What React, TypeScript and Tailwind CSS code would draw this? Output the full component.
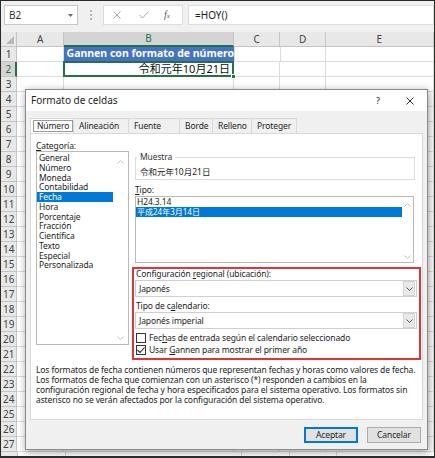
import React from "react";

function ChevUp({ className }: { className?: string }) {
  return (
    <svg width="7" height="4" viewBox="0 0 7 4" className={className}>
      <path d="M0.5 3.5L3.5 0.5L6.5 3.5" fill="none" stroke="currentColor" strokeWidth="1" />
    </svg>
  );
}
function ChevDown({ className }: { className?: string }) {
  return (
    <svg width="7" height="4" viewBox="0 0 7 4" className={className}>
      <path d="M0.5 0.5L3.5 3.5L6.5 0.5" fill="none" stroke="currentColor" strokeWidth="1" />
    </svg>
  );
}

function FormulaBar() {
  return (
    <div className="flex h-[31px] bg-[#f0f0f0] pt-[4px] pl-[3px]">
      <div className="relative w-[74px] h-[20px] bg-white border border-[#c8c8c8] flex items-center pl-[4px] text-[10px] text-[#333]">
        B2
        <svg width="5" height="3" viewBox="0 0 5 3" className="absolute right-[4px] top-[8px] text-[#666]">
          <path d="M0 0H5L2.5 3Z" fill="currentColor" />
        </svg>
      </div>
      <div className="w-[25px] h-[20px] flex flex-col items-center justify-center gap-[2px]">
        <span className="w-[2px] h-[2px] bg-[#b4b4b4]" />
        <span className="w-[2px] h-[2px] bg-[#b4b4b4]" />
        <span className="w-[2px] h-[2px] bg-[#b4b4b4]" />
      </div>
      <div className="w-[80px] h-[20px] bg-white border border-[#dcdcdc] flex items-center">
        <svg width="8" height="8" viewBox="0 0 8 8" className="ml-[9px] text-[#a8a8a8]">
          <path d="M0.5 0.5L7.5 7.5M7.5 0.5L0.5 7.5" stroke="currentColor" strokeWidth="1" />
        </svg>
        <svg width="10" height="8" viewBox="0 0 10 8" className="ml-[18px] text-[#a8a8a8]">
          <path d="M0.5 4L3.5 7L9.5 0.5" fill="none" stroke="currentColor" strokeWidth="1" />
        </svg>
        <span className="ml-[15px] font-['Liberation_Serif',serif] italic text-[10px] text-[#555] leading-none">
          f<span className="text-[7px]">x</span>
        </span>
      </div>
      <div className="flex-1 ml-[5px] h-[20px] bg-white border border-[#dcdcdc] flex items-center pl-[6px] text-[10px] text-[#222]">
        =HOY()
      </div>
    </div>
  );
}

function Grid() {
  const rows = Array.from({ length: 27 }, (_, i) => i + 1);
  return (
    <div className="flex flex-col">
      <div className="flex h-[15px] text-[10px] text-[#444]">
        <div className="relative w-[17px] h-full bg-[#e8e8e8] border-r border-b border-[#c4c4c4]">
          <svg width="8" height="8" viewBox="0 0 8 8" className="absolute right-[2px] bottom-[2px]">
            <path d="M8 0V8H0Z" fill="#b8b8b8" />
          </svg>
        </div>
        <div className="w-[48px] h-full bg-[#e8e8e8] border-r border-b border-[#c4c4c4] flex items-center justify-center">A</div>
        <div className="w-[176px] h-full bg-[#d4d4d4] border-r border-[#c4c4c4] border-b-2 border-b-[#217346] flex items-center justify-center text-[#217346]">B</div>
        <div className="w-[48px] h-full bg-[#e8e8e8] border-r border-b border-[#c4c4c4] flex items-center justify-center">C</div>
        <div className="w-[47px] h-full bg-[#e8e8e8] border-r border-b border-[#c4c4c4] flex items-center justify-center">D</div>
        <div className="w-[112px] h-full bg-[#e8e8e8] border-r border-b border-[#c4c4c4] flex items-center justify-center">E</div>
      </div>
      {rows.map((n) => (
        <div key={n} className="flex h-[15px]">
          <div
            className={
              n === 2
                ? "w-[17px] h-full bg-[#d4d4d4] border-r-2 border-r-[#217346] border-b border-b-[#c4c4c4] flex items-center justify-center text-[10px] text-[#217346]"
                : "w-[17px] h-full bg-[#e8e8e8] border-r border-b border-[#c4c4c4] flex items-center justify-center text-[10px] text-[#444]"
            }
          >
            {n}
          </div>
          <div className="w-[48px] h-full border-r border-b border-[#dcdcdc]" />
          {n === 1 ? (
            <div className="w-[176px] h-full bg-[#4472c4] border-r border-b border-[#dcdcdc] flex items-center pl-[3px] text-[10.5px] font-bold text-white whitespace-nowrap">
              Gannen con formato de número
            </div>
          ) : n === 2 ? (
            <div className="relative w-[176px] h-full border-r border-b border-[#dcdcdc] flex items-center justify-end pr-[3px] text-[11px] text-[#111] font-['Noto_Sans','Noto_Sans_CJK_JP',sans-serif]">
              令和元年10月21日
              <div className="absolute -left-[1px] -top-[1px] -right-[1px] -bottom-[1px] border-2 border-[#217346]" />
              <div className="absolute -right-[3px] -bottom-[3px] w-[5px] h-[5px] bg-[#217346] border border-white" />
            </div>
          ) : (
            <div className="w-[176px] h-full border-r border-b border-[#dcdcdc]" />
          )}
          <div className="w-[48px] h-full border-r border-b border-[#dcdcdc]" />
          <div className="w-[47px] h-full border-r border-b border-[#dcdcdc]" />
          <div className="w-[112px] h-full border-r border-b border-[#dcdcdc]" />
        </div>
      ))}
      <div className="flex h-[15px]">
        <div className="w-[17px] h-full bg-[#e8e8e8] border-r border-[#c4c4c4]" />
        <div className="w-[48px] h-full border-r border-[#dcdcdc]" />
        <div className="w-[176px] h-full border-r border-[#dcdcdc]" />
        <div className="w-[48px] h-full border-r border-[#dcdcdc]" />
        <div className="w-[47px] h-full border-r border-[#dcdcdc]" />
      </div>
    </div>
  );
}

const categories = [
  "General",
  "Número",
  "Moneda",
  "Contabilidad",
  "Fecha",
  "Hora",
  "Porcentaje",
  "Fracción",
  "Científica",
  "Texto",
  "Especial",
  "Personalizada",
];

const tabs = [
  { label: "Número", w: "w-[44px]", sel: true },
  { label: "Alineación", w: "w-[55px]", sel: false },
  { label: "Fuente", w: "w-[51px]", sel: false },
  { label: "Borde", w: "w-[33px]", sel: false },
  { label: "Relleno", w: "w-[39px]", sel: false },
  { label: "Proteger", w: "w-[45px]", sel: false },
];

function Dropdown({ text }: { text: string }) {
  return (
    <div className="ml-[1px] w-[282px] h-[17px] bg-white border border-[#cfcfcf] flex items-center">
      <span className="flex-1 pl-[3px]">{text}</span>
      <div className="w-[12px] h-[15px] mr-[1px] bg-[#e9e9e9] border border-[#d4d4d4] flex items-center justify-center text-[#555]">
        <ChevDown />
      </div>
    </div>
  );
}

function Dialog() {
  return (
    <div className="absolute left-[24px] top-[88px] w-[403px] h-[361px] border border-[#8a8a8a] bg-[#f0f0f0] shadow-[1px_2px_8px_rgba(0,0,0,0.4)] flex flex-col text-[#1e1e1e]">
      <div className="h-[21px] shrink-0 bg-white flex items-center pl-[5px]">
        <span className="text-[10px]">Formato de celdas</span>
        <span className="ml-auto text-[9px]">?</span>
        <svg width="8" height="8" viewBox="0 0 8 8" className="ml-[26px] mr-[13px] text-[#333]">
          <path d="M0.5 0.5L7.5 7.5M7.5 0.5L0.5 7.5" stroke="currentColor" strokeWidth="1" />
        </svg>
      </div>
      <div className="pl-[4px] pt-[7px] flex flex-col text-[8.5px] leading-[10px] tracking-[-0.12px]">
        <div className="flex h-[15px]">
          {tabs.map((t, i) => (
            <div
              key={t.label}
              className={
                (t.sel
                  ? "bg-white border-l border-t border-r border-[#d9d9d9] "
                  : "bg-[#f0f0f0] border-t border-r border-[#d9d9d9] ") +
                t.w +
                " h-full flex items-center " +
                (i === 0 ? "pl-[2px]" : "pl-[5px]")
              }
            >
              {t.sel ? (
                <span className="border border-[#9a9a9a] px-[3px] leading-[10px]">{t.label}</span>
              ) : (
                t.label
              )}
            </div>
          ))}
        </div>
        <div className="w-[393px] h-[287px] bg-white border border-[#d9d9d9] pl-[5px] flex flex-col">
          <div className="flex gap-[3px]">
            <div className="w-[93px] pt-[7px] flex flex-col">
              <div className="h-[10px]">
                <span className="underline">C</span>ategoría:
              </div>
              <div className="h-[194px] border border-[#b9b9b9] flex">
                <div className="w-[76px] pt-[1px] flex flex-col">
                  {categories.map((c) => (
                    <div
                      key={c}
                      className={
                        c === "Fecha"
                          ? "h-[9.75px] leading-[9.75px] pl-[2px] bg-[#0078d7] text-white"
                          : "h-[9.75px] leading-[9.75px] pl-[2px]"
                      }
                    >
                      {c}
                    </div>
                  ))}
                </div>
                <div className="flex-1 flex flex-col items-center justify-between pt-[8px] pb-[4px] text-[#c4c4c4]">
                  <ChevUp />
                  <ChevDown />
                </div>
              </div>
            </div>
            <div className="w-[289px] flex flex-col">
              <div className="relative mt-[23px] ml-[3px] w-[280px] h-[23px] border border-[#dcdcdc] flex items-end pb-[2px] pl-[4px]">
                <span className="absolute -top-[6px] left-[1px] bg-white px-[3px] text-[#333]">Muestra</span>
                <span className="text-[8.5px] tracking-normal font-['Noto_Sans','Noto_Sans_CJK_JP',sans-serif]">令和元年10月21日</span>
              </div>
              <div className="mt-[5px] ml-[3px] h-[10px]">
                <span className="underline">T</span>ipo:
              </div>
              <div className="mt-[1px] ml-[3px] w-[279px] h-[67px] border border-[#b9b9b9] flex">
                <div className="w-[266px] flex flex-col">
                  <div className="h-[10px] pl-[1px]">H24.3.14</div>
                  <div className="h-[10px] pl-[1px] bg-[#0078d7] text-white text-[8px] tracking-normal font-['Noto_Sans','Noto_Sans_CJK_JP',sans-serif]">
                    平成24年3月14日
                  </div>
                </div>
                <div className="flex-1 flex flex-col items-center justify-between pt-[6px] pb-[3px] text-[#c4c4c4]">
                  <ChevUp />
                  <ChevDown />
                </div>
              </div>
              <div className="mt-[4px] w-[289px] h-[93px] border-2 border-[#e0343a] flex flex-col">
                <div className="ml-[2px] h-[10px]">
                  Configuración <span className="underline">r</span>egional (ubicación):
                </div>
                <div className="mt-[1px]">
                  <Dropdown text="Japonés" />
                </div>
                <div className="ml-[2px] mt-[4px] h-[10px]">
                  Tipo de c<span className="underline">a</span>lendario:
                </div>
                <div className="mt-[1px]">
                  <Dropdown text="Japonés imperial" />
                </div>
                <div className="ml-[2px] mt-[4px] h-[10px] flex items-center">
                  <span className="w-[10px] h-[10px] border border-[#333] bg-white" />
                  <span className="ml-[3px]">
                    Fec<span className="underline">h</span>as de entrada según el calendario seleccionado
                  </span>
                </div>
                <div className="ml-[2px] mt-[2px] h-[10px] flex items-center">
                  <span className="w-[10px] h-[10px] border border-[#333] bg-white flex items-center justify-center">
                    <svg width="8" height="6" viewBox="0 0 8 6">
                      <path d="M0.5 3L3 5.5L7.5 0.5" fill="none" stroke="#222" strokeWidth="1.1" />
                    </svg>
                  </span>
                  <span className="ml-[3px]">
                    Usar <span className="underline">G</span>annen para mostrar el primer año
                  </span>
                </div>
              </div>
            </div>
          </div>
          <div className="mt-[5px] flex flex-col whitespace-nowrap text-[#222]">
            <div>Los formatos de fecha contienen números que representan fechas y horas como valores de fecha.</div>
            <div>Los formatos de fecha que comienzan con un asterisco (*) responden a cambios en la</div>
            <div>configuración regional de fecha y hora especificados para el sistema operativo. Los formatos sin</div>
            <div>asterisco no se verán afectados por la configuración del sistema operativo.</div>
          </div>
        </div>
        <div className="mt-[7px] w-[393px] pr-[2px] flex justify-end gap-[9px]">
          <div className="w-[54px] h-[16px] bg-[#e1e1e1] border-2 border-[#0078d7] flex items-center justify-center">
            Aceptar
          </div>
          <div className="w-[54px] h-[16px] bg-[#e1e1e1] border border-[#adadad] flex items-center justify-center">
            Cancelar
          </div>
        </div>
      </div>
    </div>
  );
}

export default function App() {
  return (
    <div className="relative w-[435px] h-[458px] overflow-hidden border border-b-2 border-[#2b2b2b] bg-white font-['Noto_Sans','Noto_Sans_CJK_JP',sans-serif]">
      <FormulaBar />
      <Grid />
      <Dialog />
    </div>
  );
}
